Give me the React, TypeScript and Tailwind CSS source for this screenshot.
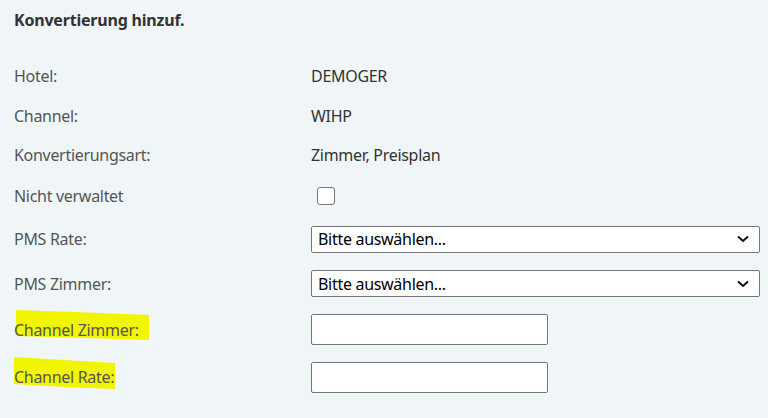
import React from "react";

const font = { fontFamily: '"Noto Sans", "Open Sans", sans-serif' };

const Chevron = () => (
  <svg
    width="12"
    height="8"
    viewBox="0 0 12 8"
    className="pointer-events-none absolute right-[11px] top-1/2 -translate-y-1/2"
  >
    <polyline points="1,1.5 6,6 11,1.5" fill="none" stroke="#111" strokeWidth="2" />
  </svg>
);

const Highlight = ({ points, w, h }: { points: string; w: number; h: number }) => (
  <svg width={w} height={h} className="absolute left-0 top-0" viewBox={`0 0 ${w} ${h}`}>
    <polygon points={points} fill="#f2f500" />
  </svg>
);

const SelectBox = () => (
  <div className="relative w-[449px]">
    <select className="w-full h-[27px] appearance-none bg-white border border-[#767676] rounded-[2px] pl-[6px] text-[16px] tracking-[-0.3px] text-black outline-none">
      <option>Bitte auswählen...</option>
    </select>
    <Chevron />
  </div>
);

const TextInput = () => (
  <input
    type="text"
    className="w-[237px] h-[31px] bg-white border border-[#767676] rounded-[2px] px-2 outline-none"
  />
);

const Row = ({
  label,
  height,
  children,
  marked,
}: {
  label: React.ReactNode;
  height: string;
  children: React.ReactNode;
  marked?: React.ReactNode;
}) => (
  <div className={`flex items-center ${height}`}>
    <div className="relative w-[297px] text-[#555]">
      {marked}
      <span className="relative">{label}</span>
    </div>
    <div className="text-[#333]">{children}</div>
  </div>
);

export default function App() {
  return (
    <div className="min-h-screen bg-[#f0f5f8] pl-[14px] text-[16px] tracking-[-0.3px]" style={font}>
      <div className="h-10 flex items-center font-bold text-[#333] tracking-[-0.2px]">Konvertierung hinzuf.</div>
      <div className="mt-4 flex flex-col">
        <Row label="Hotel:" height="h-10">DEMOGER</Row>
        <Row label="Channel:" height="h-[39px]">WIHP</Row>
        <Row label="Konvertierungsart:" height="h-10">Zimmer, Preisplan</Row>
        <Row label="Nicht verwaltet" height="h-[42px]">
          <input
            type="checkbox"
            className="block ml-[6px] w-[18px] h-[18px] appearance-none bg-white border border-[#767676] rounded-[3px]"
          />
        </Row>
        <Row label="PMS Rate:" height="h-11">
          <SelectBox />
        </Row>
        <Row label="PMS Zimmer:" height="h-[45px]">
          <SelectBox />
        </Row>
        <Row
          label="Channel Zimmer:"
          height="h-[47px]"
          marked={
            <div className="absolute left-[2px] -top-[8px]">
              <Highlight w={134} h={31} points="0,0 60,2 133,5 133,30 70,28 0,26" />
            </div>
          }
        >
          <TextInput />
        </Row>
        <Row
          label="Channel Rate:"
          height="h-12"
          marked={
            <div className="absolute left-0 -top-[8px]">
              <Highlight w={102} h={33} points="0,0 50,3 101,6 101,32 50,30 0,27" />
            </div>
          }
        >
          <TextInput />
        </Row>
      </div>
    </div>
  );
}
